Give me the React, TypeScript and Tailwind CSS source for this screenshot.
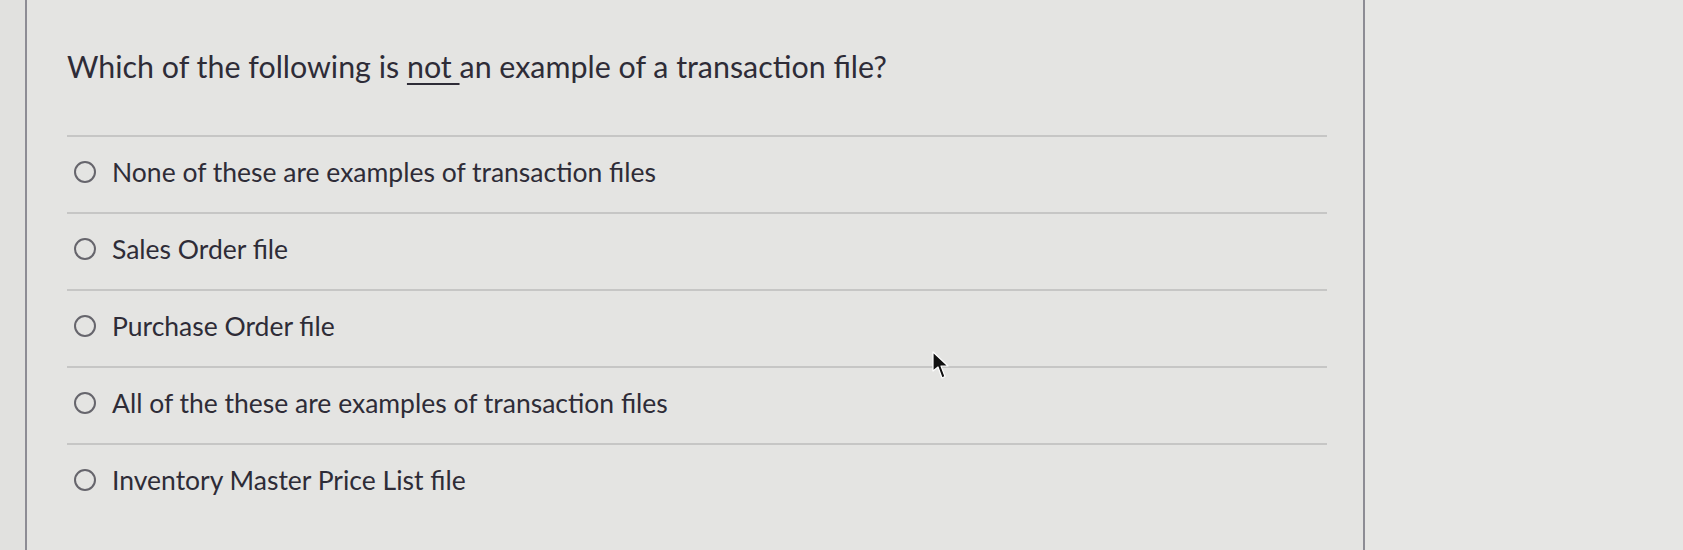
import React from "react";

const options = [
  "None of these are examples of transaction files",
  "Sales Order file",
  "Purchase Order file",
  "All of the these are examples of transaction files",
  "Inventory Master Price List file",
];

export default function App() {
  return (
    <div
      className="relative w-[1683px] h-[550px] overflow-hidden bg-[#e4e4e2] flex text-[#2e2c37]"
      style={{ fontFamily: "Lato, 'Open Sans', sans-serif" }}
    >
      <div className="w-[25px] shrink-0 bg-[#e1e1df]" />
      <div className="w-[1340px] shrink-0 h-full border-l-2 border-r-2 border-[#8d8c94] pl-[40px] pr-[36px] pt-[49px]">
        <h1 className="text-[30.4px] leading-[34px] font-normal">
          Which of the following is <span className="underline underline-offset-[5px] decoration-[1.5px]">not </span>an example of a transaction file?
        </h1>
        <div className="mt-[52px]">
          {options.map((o) => (
            <div key={o} className="border-t-2 border-[#c6c6c5]">
              <div className="h-[75px] flex items-center pl-[7px] pb-[6px] gap-[16px]">
                <span className="w-[22px] h-[22px] rounded-full border-2 border-[#66656c] shrink-0" />
                <span className="text-[26.5px] leading-[34px]">{o}</span>
              </div>
            </div>
          ))}
        </div>
      </div>
      <div className="flex-1 bg-[#e6e6e4]" />
      <svg
        className="absolute left-[931px] top-[351px]"
        width="20"
        height="30"
        viewBox="0 0 20 30"
      >
        <path
          d="M2 1 L2 20 L7 16 L11 27 L14 25.5 L10 15 L17 15 Z"
          fill="#111"
          stroke="#fff"
          strokeWidth="1.2"
          strokeLinejoin="round"
        />
      </svg>
    </div>
  );
}
